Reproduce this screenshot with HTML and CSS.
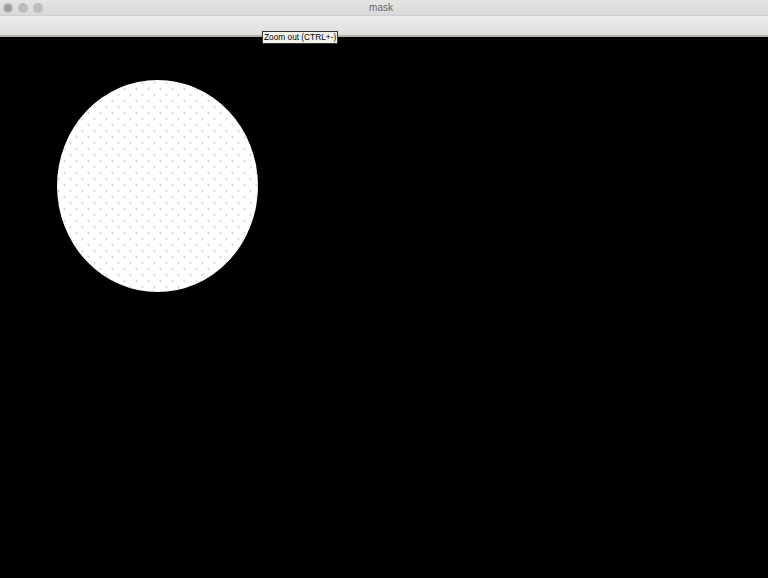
FILE: index.html
```html
<!DOCTYPE html>
<html>
<head>
<meta charset="utf-8">
<title>mask</title>
<link rel="stylesheet" href="styles.css">
</head>
<body>
<div class="window">
  <div class="titlebar">
    <div class="lights">
      <span class="light close"><svg width="10" height="10" viewBox="0 0 10 10"><g fill="#707070"><circle cx="3" cy="3" r="0.7"/><circle cx="5" cy="3" r="0.7"/><circle cx="7" cy="3" r="0.7"/><circle cx="3" cy="5" r="0.7"/><circle cx="5" cy="5" r="0.7"/><circle cx="7" cy="5" r="0.7"/><circle cx="3" cy="7" r="0.7"/><circle cx="5" cy="7" r="0.7"/><circle cx="7" cy="7" r="0.7"/></g></svg></span>
      <span class="light"></span>
      <span class="light"></span>
    </div>
    <div class="title">mask</div>
  </div>
  <div class="toolbar"></div>
  <div class="canvas">
    <svg class="mask" width="768" height="541" viewBox="0 0 768 541">
      <defs>
        <pattern id="dots" width="24" height="24" patternUnits="userSpaceOnUse">
          <rect width="24" height="24" fill="#ffffff"/>
          <g fill="#dedede">
            <rect x="3" y="3.5" width="3" height="1"/><rect x="4" y="2.5" width="1" height="3"/>
            <rect x="15" y="3.5" width="3" height="1"/><rect x="16" y="2.5" width="1" height="3"/>
            <rect x="9" y="9.5" width="3" height="1"/><rect x="10" y="8.5" width="1" height="3"/>
            <rect x="21" y="9.5" width="3" height="1"/><rect x="22" y="8.5" width="1" height="3"/>
            <rect x="3" y="15.5" width="3" height="1"/><rect x="4" y="14.5" width="1" height="3"/>
            <rect x="15" y="15.5" width="3" height="1"/><rect x="16" y="14.5" width="1" height="3"/>
            <rect x="9" y="21.5" width="3" height="1"/><rect x="10" y="20.5" width="1" height="3"/>
            <rect x="21" y="21.5" width="3" height="1"/><rect x="22" y="20.5" width="1" height="3"/>
          </g>
        </pattern>
      </defs>
      <ellipse cx="157.5" cy="149" rx="100.5" ry="106" fill="url(#dots)"/>
    </svg>
  </div>
  <div class="tooltip">Zoom out (CTRL+-)</div>
</div>
</body>
</html>
```

FILE: styles.css
```css
html, body {
  margin: 0;
  padding: 0;
  background: #000;
}
.window {
  position: relative;
  width: 768px;
  height: 578px;
  display: flex;
  flex-direction: column;
  overflow: hidden;
  font-family: "Liberation Sans", Arial, sans-serif;
}
.titlebar {
  height: 15px;
  background: linear-gradient(#e4e4e4, #d9d9d9);
  display: flex;
  align-items: center;
  position: relative;
  border-bottom: 1px solid #cfcfcf;
}
.lights {
  display: flex;
  gap: 5px;
  padding-left: 3px;
  align-items: center;
}
.light {
  width: 10px;
  height: 10px;
  border-radius: 50%;
  background: #bdbdbd;
  display: flex;
}
.light.close {
  background: #b5b5b5;
}
.title {
  position: absolute;
  left: 0;
  right: 0;
  top: 0;
  text-align: center;
  font-size: 10px;
  line-height: 15px;
  color: #6a6a6a;
  padding-right: 6px;
}
.toolbar {
  height: 19px;
  background: linear-gradient(#ececec, #e6e6e6 40%, #dedede);
  border-bottom: 2px solid #b4b0a8;
}
.canvas {
  flex: 1;
  background: #000;
}
.mask {
  display: block;
}
.tooltip {
  position: absolute;
  left: 262px;
  top: 31px;
  padding: 0 1px;
  height: 11px;
  line-height: 11px;
  font-size: 8.3px;
  color: #000;
  background: #f2f2ea;
  border: 1px solid #333;
  white-space: nowrap;
}
```
